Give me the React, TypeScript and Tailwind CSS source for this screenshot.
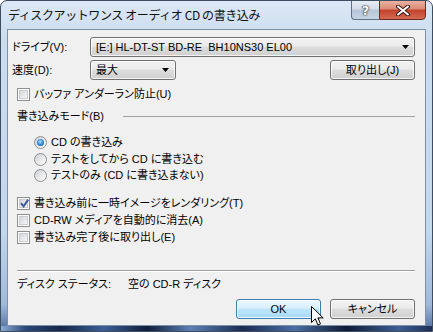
import React from "react";

const ui = "font-['Liberation_Sans','Noto_Sans_CJK_JP',sans-serif]";
const btnBase =
  "h-[20px] w-[85px] rounded-[3px] border flex items-center shadow-[inset_0_0_0_1px_rgba(255,255,255,0.75)]";
const btnGray =
  "border-[#707070] bg-[linear-gradient(#f2f2f2,#ebebeb_45%,#dddddd_50%,#cfcfcf)]";
const btnHot =
  "border-[#3c7fb1] bg-[linear-gradient(#eaf6fd,#d9f0fc_45%,#bee6fd_50%,#a7d9f5)]";

function Arrow() {
  return (
    <svg width="7" height="4" viewBox="0 0 7 4" className="shrink-0">
      <path d="M0 0h7L3.5 4z" fill="#000" />
    </svg>
  );
}

function Box({ checked }: { checked?: boolean }) {
  return (
    <span className="relative w-[13px] h-[13px] shrink-0 border border-[#8e8f8f] bg-white p-px">
      <span className="block w-full h-full border border-[#c9ccd0] bg-gradient-to-br from-[#d2d5d9] to-[#f8f8f8]" />
      {checked && (
        <svg className="absolute left-px top-0" width="11" height="11" viewBox="0 0 11 11">
          <path d="M2 5.2l2.6 3.2L9.2 1.6" fill="none" stroke="#3d5b98" strokeWidth="2" />
        </svg>
      )}
    </span>
  );
}

function Radio({ on }: { on?: boolean }) {
  return (
    <span className="w-[13px] h-[13px] shrink-0 rounded-full border border-[#8e8f8f] bg-gradient-to-br from-[#cdd0d4] to-[#ffffff] flex items-center justify-center">
      {on && (
        <span className="w-[7px] h-[7px] rounded-full bg-[radial-gradient(circle_at_45%_40%,#b4e6fc,#2a7fcf_55%,#0e4f93)]" />
      )}
    </span>
  );
}

function Rule() {
  return <div className="h-[2px] border-t border-[#a0a0a0] border-b border-b-white" />;
}

export default function App() {
  return (
    <div className={`w-[433px] h-[332px] bg-white ${ui} text-black relative`}>
      <div className="w-full h-full rounded-t-[7px] border border-[#3e4d60] flex flex-col overflow-hidden bg-[linear-gradient(#dce8f5,#cbdcef_12%,#c3d7ed_70%,#9fb9da_92%,#4e6d9c)]">
        {/* Title bar */}
        <div className="h-[28px] flex items-start shrink-0">
          <div className="pl-[7px] pt-[4px] text-[12px] leading-[20px] tracking-[-0.4px] text-[#101010] flex-1 font-['Noto_Sans_CJK_JP',sans-serif]">
            ディスクアットワンス オーディオ CD の書き込み
          </div>
          <div className="flex -mt-px mr-[6px]">
            <div className="w-[28px] h-[20px] rounded-bl-[4px] border border-[#5f6f84] border-r-0 bg-[linear-gradient(#e6edf5,#d3dde9_45%,#b6c5d7_50%,#c6d4e3)] flex items-center justify-center">
              <span className="text-[13px] font-bold leading-none text-white [text-shadow:0_0_1px_#333,0_0_1px_#333,0_0_2px_#333] font-['DejaVu_Sans',sans-serif]">
                ?
              </span>
            </div>
            <div className="w-[47px] h-[20px] rounded-br-[4px] border border-[#6a2a20] bg-[linear-gradient(#eab0a2,#da8a76_45%,#c2412b_50%,#d46a52)] flex items-center justify-center">
              <svg width="14" height="11" viewBox="0 0 14 11">
                <path d="M2 1.5l10 8M12 1.5l-10 8" stroke="#3b1a16" strokeWidth="4" strokeLinecap="round" />
                <path d="M2 1.5l10 8M12 1.5l-10 8" stroke="#ffffff" strokeWidth="2" strokeLinecap="round" />
              </svg>
            </div>
          </div>
        </div>

        {/* Client area */}
        <div className="mx-[6px] h-[297px] shrink-0 border border-[#7d90a8] bg-[#f0f0f0] text-[11px] leading-none [font-feature-settings:'palt'] flex flex-col">
          <div className="mt-[7px] h-[20px] flex items-center">
            <span className="ml-[4px] w-[78px]">ドライブ(V):</span>
            <div className={`${btnBase} ${btnGray} w-[325px] justify-between pl-[5px] pr-[5px]`}>
              <span>[E:] HL-DT-ST BD-RE&nbsp; BH10NS30 EL00</span>
              <Arrow />
            </div>
          </div>

          <div className="mt-[3px] h-[20px] flex items-center pr-[10px]">
            <span className="ml-[4px] w-[78px]">速度(D):</span>
            <div className={`${btnBase} ${btnGray} w-[86px] justify-between pl-[5px] pr-[6px]`}>
              <span>最大</span>
              <Arrow />
            </div>
            <div className={`${btnBase} ${btnGray} justify-center ml-auto`}>取り出し(J)</div>
          </div>

          <div className="mt-[7px] h-[15px] flex items-center gap-[4px] ml-[9px]">
            <Box />
            <span>バッファ アンダーラン防止(U)</span>
          </div>

          <div className="mt-[6px] h-[16px] flex items-center ml-[9px] mr-[10px]">
            <span className="w-[106px]">書き込みモード(B)</span>
            <div className="flex-1 h-px bg-[#a0a0a0]" />
          </div>

          <div className="mt-[10px] flex flex-col ml-[26px]">
            <div className="h-[17px] flex items-center gap-[4px]">
              <Radio on />
              <span>CD の書き込み</span>
            </div>
            <div className="h-[16px] flex items-center gap-[4px]">
              <Radio />
              <span>テストをしてから CD に書き込む</span>
            </div>
            <div className="h-[17px] flex items-center gap-[4px]">
              <Radio />
              <span>テストのみ (CD に書き込まない)</span>
            </div>
          </div>

          <div className="mt-[11px] flex flex-col ml-[9px]">
            <div className="h-[17px] flex items-center gap-[4px]">
              <Box checked />
              <span>書き込み前に一時イメージをレンダリング(T)</span>
            </div>
            <div className="h-[17px] flex items-center gap-[4px]">
              <Box />
              <span>CD-RW メディアを自動的に消去(A)</span>
            </div>
            <div className="h-[17px] flex items-center gap-[4px]">
              <Box />
              <span>書き込み完了後に取り出し(E)</span>
            </div>
          </div>

          <div className="mt-[24px] ml-[9px] mr-[10px]">
            <Rule />
          </div>

          <div className="mt-[4px] h-[16px] flex items-center ml-[9px]">
            <span className="w-[111px]">ディスク ステータス:</span>
            <span>空の CD-R ディスク</span>
          </div>

          <div className="mt-[7px] flex justify-end gap-[9px] pr-[10px]">
            <div className={`${btnBase} ${btnHot} justify-center`}>OK</div>
            <div className={`${btnBase} ${btnGray} justify-center`}>キャンセル</div>
          </div>
        </div>

        {/* Bottom glass edge */}
        <div className="flex-1 mx-[-1px] bg-[linear-gradient(90deg,#8fb0d8_0%,#2a4676_6%,#16274a_14%,#3a5f96_24%,#101d3a_34%,#5a7fb4_44%,#1a2c52_56%,#4a6ea4_68%,#0f1b36_80%,#3d5f92_92%,#1b2e55_100%)]" />
      </div>

      {/* Mouse pointer */}
      <svg className="absolute left-[311px] top-[306px]" width="13" height="21" viewBox="0 0 13 21">
        <path
          d="M0.5 0.5v16l3.8-3.7 2.6 6.2 2.6-1.1-2.6-6h5.3z"
          fill="#fff"
          stroke="#000"
          strokeWidth="1"
          strokeLinejoin="round"
        />
      </svg>
    </div>
  );
}
